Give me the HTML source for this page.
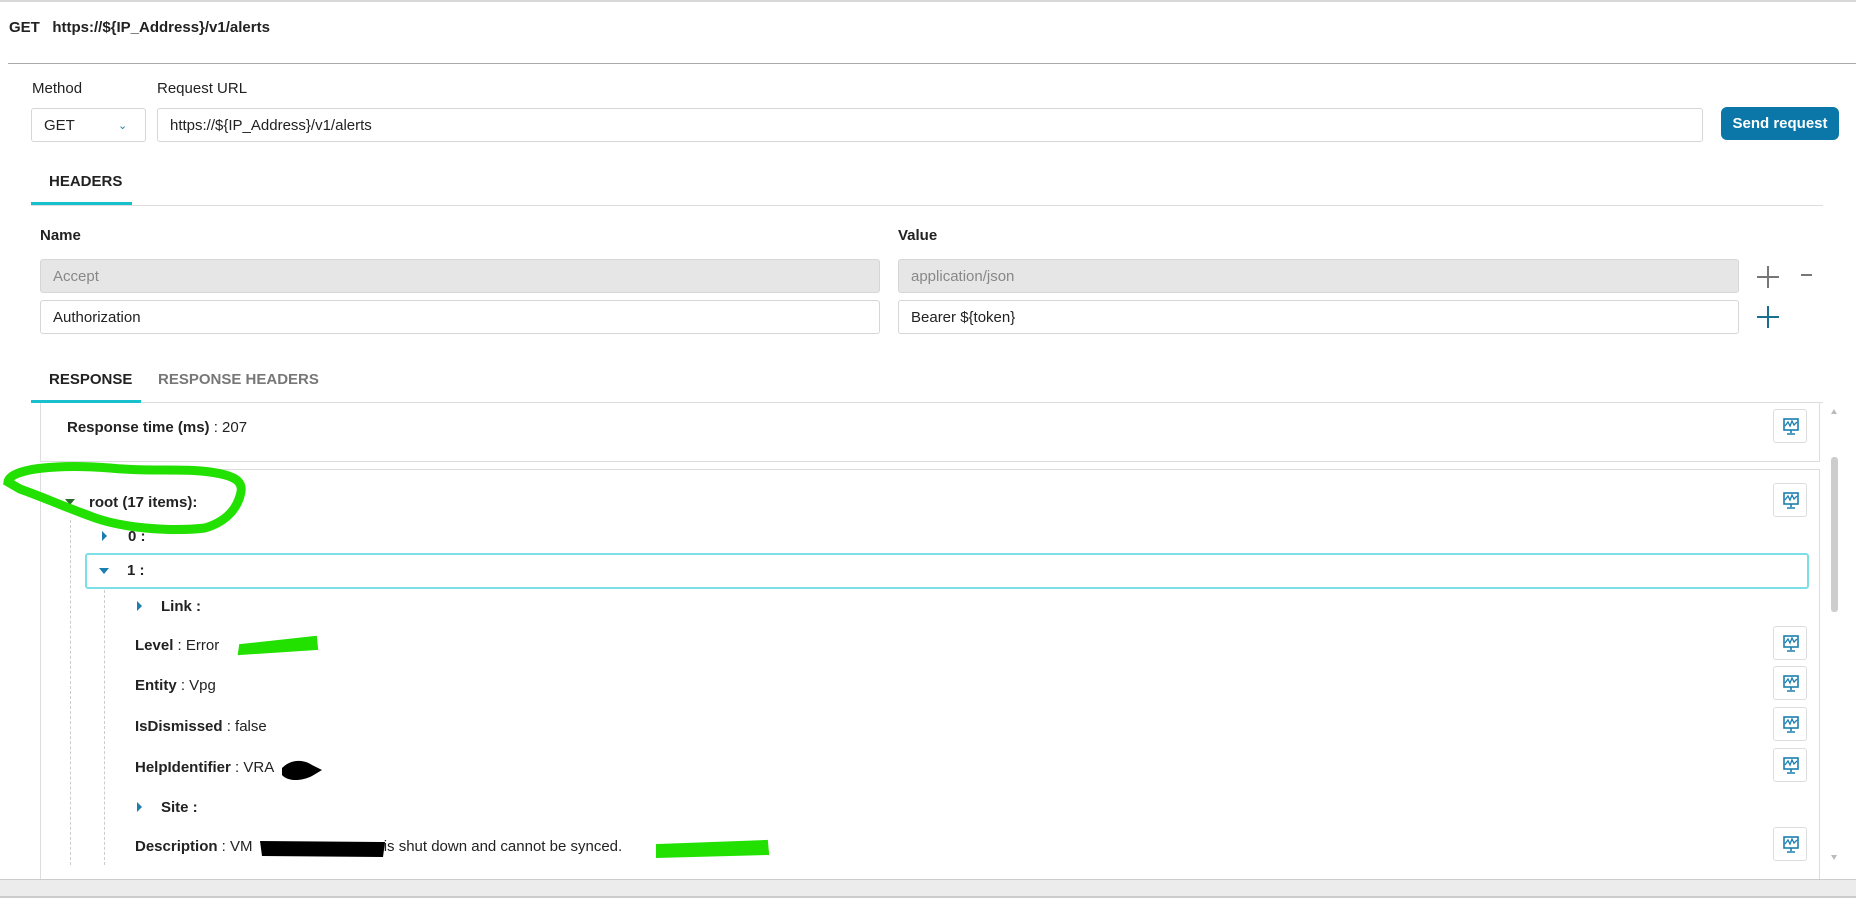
<!DOCTYPE html>
<html><head><style>
*{box-sizing:border-box;margin:0;padding:0}
body{width:1856px;height:906px;position:relative;background:#fff;font-family:"Liberation Sans",sans-serif;font-size:15px;color:#222;overflow:hidden}
.a{position:absolute}
.inp{position:absolute;border:1px solid #d6d6d6;border-radius:3px;height:34px;line-height:34px;padding-left:12px;font-size:15px;color:#222}
.g{background:#e6e6e6;color:#888}
b{font-weight:bold}
.tri{position:absolute;width:0;height:0}
.tr{border-top:5px solid transparent;border-bottom:5px solid transparent;border-left:5px solid #1a7fb0}
.td{border-left:5px solid transparent;border-right:5px solid transparent;border-top:6px solid #1a7fb0}
.ib{position:absolute;left:1773px;width:34px;height:34px;border:1px solid #ddd;border-radius:3px}
</style></head><body>
<div class="a" style="left:0;top:0;width:1856px;height:2px;background:#d8d8d8"></div>
<div class="a" style="left:9px;top:19px;font-weight:bold;font-size:15px">GET&nbsp;&nbsp; https://${IP_Address}/v1/alerts</div>
<div class="a" style="left:8px;top:63px;width:1848px;height:1px;background:#aaa"></div>
<div class="a" style="left:32px;top:80px">Method</div>
<div class="a" style="left:157px;top:80px">Request URL</div>
<div class="inp" style="left:31px;top:108px;width:115px">GET<span style="position:absolute;left:86px;top:0;color:#1a7fb0;font-size:11px">&#8964;</span></div>
<div class="inp" style="left:157px;top:108px;width:1546px">https://${IP_Address}/v1/alerts</div>
<div class="a" style="left:1721px;top:107px;width:118px;height:33px;background:#0a77a8;border-radius:6px;color:#fff;font-weight:bold;line-height:33px;text-align:center">Send request</div>
<div class="a" style="left:49px;top:173px;font-weight:bold">HEADERS</div>
<div class="a" style="left:31px;top:205px;width:1792px;height:1px;background:#ddd"></div>
<div class="a" style="left:31px;top:202px;width:101px;height:3px;background:#17c0cc"></div>
<div class="a" style="left:40px;top:227px;font-weight:bold">Name</div>
<div class="a" style="left:898px;top:227px;font-weight:bold">Value</div>
<div class="inp g" style="left:40px;top:259px;width:840px">Accept</div>
<div class="inp g" style="left:898px;top:259px;width:841px">application/json</div>
<div class="inp" style="left:40px;top:300px;width:840px">Authorization</div>
<div class="inp" style="left:898px;top:300px;width:841px">Bearer ${token}</div>
<div class="a" style="left:1757px;top:276px;width:22px;height:2px;background:#777"></div>
<div class="a" style="left:1767px;top:266px;width:2px;height:22px;background:#777"></div>
<div class="a" style="left:1801px;top:274px;width:11px;height:2px;background:#777"></div>
<div class="a" style="left:1757px;top:316px;width:22px;height:2px;background:#1a6f90"></div>
<div class="a" style="left:1767px;top:306px;width:2px;height:22px;background:#1a6f90"></div>
<div class="a" style="left:49px;top:371px;font-weight:bold">RESPONSE</div>
<div class="a" style="left:158px;top:371px;font-weight:bold;color:#777">RESPONSE HEADERS</div>
<div class="a" style="left:31px;top:402px;width:1792px;height:1px;background:#ddd"></div>
<div class="a" style="left:31px;top:400px;width:110px;height:3px;background:#17c0cc"></div>
<div class="a" style="left:40px;top:403px;width:1780px;height:59px;border:1px solid #ddd;border-top:none"></div>
<div class="a" style="left:67px;top:419px"><b>Response time (ms)</b> : 207</div>
<div class="a" style="left:40px;top:469px;width:1780px;height:420px;border-left:1px solid #ddd;border-right:1px solid #ddd;border-top:1px solid #ddd"></div>
<div class="a" style="left:70px;top:520px;height:345px;border-left:1px dashed #ccc"></div>
<div class="a" style="left:104px;top:590px;height:275px;border-left:1px dashed #ccc"></div>
<div class="tri td" style="left:65px;top:499px;border-top-color:#2a6a2a"></div>
<div class="a" style="left:89px;top:494px;font-weight:bold">root (17 items):</div>
<div class="tri tr" style="left:102px;top:531px"></div>
<div class="a" style="left:128px;top:528px;font-weight:bold">0 :</div>
<div class="a" style="left:85px;top:553px;width:1724px;height:36px;border:2px solid #7ddfe6;border-radius:3px"></div>
<div class="tri td" style="left:99px;top:568px"></div>
<div class="a" style="left:127px;top:562px;font-weight:bold">1 :</div>
<div class="tri tr" style="left:137px;top:601px"></div>
<div class="a" style="left:161px;top:598px;font-weight:bold">Link :</div>
<div class="a" style="left:135px;top:637px"><b>Level</b> : Error</div>
<div class="a" style="left:135px;top:677px"><b>Entity</b> : Vpg</div>
<div class="a" style="left:135px;top:718px"><b>IsDismissed</b> : false</div>
<div class="a" style="left:135px;top:759px"><b>HelpIdentifier</b> : VRA</div>
<div class="tri tr" style="left:137px;top:802px"></div>
<div class="a" style="left:161px;top:799px;font-weight:bold">Site :</div>
<div class="a" style="left:135px;top:838px"><b>Description</b> : VM <span style="display:inline-block;width:127px"></span>is shut down and cannot be synced.</div>
<svg class="a" style="left:0;top:0" width="1856" height="906">
<defs><g id="ic"><rect x="10" y="9" width="14" height="11" fill="none" stroke="#1a7fb0" stroke-width="1.6"/><path d="M11 16l3-4 2 4 2-5 2 4 3-3" fill="none" stroke="#1a7fb0" stroke-width="1.3"/><path d="M17 20v3M13 24h8" stroke="#1a7fb0" stroke-width="1.6"/></g></defs>
<path d="M8 482 C10 468 60 464 110 468 C150 472 180 468 210 472 C240 476 244 484 240 496 C236 510 225 522 205 528 C170 532 120 528 90 516 C60 505 40 496 20 489 Z" fill="none" stroke="#22e000" stroke-width="9"/>
<path d="M241 646 L315 638 L316 648 L240 653 Z" fill="#22e000" stroke="#22e000" stroke-width="4"/>
<path d="M658 846 L766 842 L767 853 L658 856 Z" fill="#22e000" stroke="#22e000" stroke-width="4"/>
<path d="M282 768 C292 758 305 760 312 765 L322 770 L312 776 C300 782 287 781 282 775 Z" fill="#000"/>
<path d="M260 841 L385 842 L383 857 L262 856 Z" fill="#000"/>
<rect x="1831" y="457" width="7" height="155" rx="3" fill="#cdcdcd"/>
<path d="M1831 414l3-5 3 5z" fill="#bbb"/>
<path d="M1831 855l3 5 3-5z" fill="#bbb"/>
</svg>
<div class="ib" style="top:409px"><svg width="34" height="34"><use href="#ic"/></svg></div>
<div class="ib" style="top:483px"><svg width="34" height="34"><use href="#ic"/></svg></div>
<div class="ib" style="top:626px"><svg width="34" height="34"><use href="#ic"/></svg></div>
<div class="ib" style="top:666px"><svg width="34" height="34"><use href="#ic"/></svg></div>
<div class="ib" style="top:707px"><svg width="34" height="34"><use href="#ic"/></svg></div>
<div class="ib" style="top:748px"><svg width="34" height="34"><use href="#ic"/></svg></div>
<div class="ib" style="top:827px"><svg width="34" height="34"><use href="#ic"/></svg></div>
<div class="a" style="left:0;top:879px;width:1856px;height:17px;background:#ececec;border-top:1px solid #ccc"></div>
<div class="a" style="left:0;top:896px;width:1856px;height:2px;background:#ccc"></div>
</body></html>
